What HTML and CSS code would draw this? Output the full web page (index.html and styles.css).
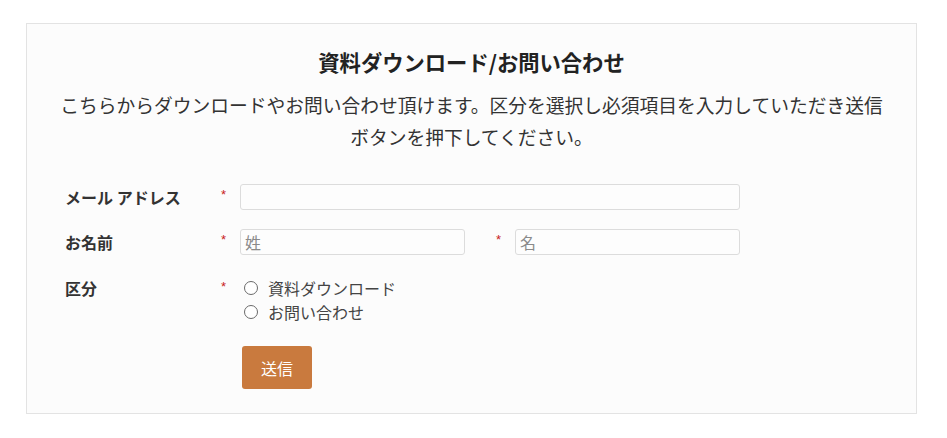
FILE: index.html
```
<!DOCTYPE html>
<html lang="ja">
  <head>
    <meta charset="UTF-8" />
    <meta name="viewport" content="width=device-width, initial-scale=1.0"/>
    <title>資料ダウンロード/お問い合わせ</title>
    <link rel="stylesheet" href="styles.css">
  </head>
  <body>
    <div class="card">
      <h2 class="title">資料ダウンロード/お問い合わせ</h2>
      <p class="lead">こちらからダウンロードやお問い合わせ頂けます。区分を選択し必須項目を入力していただき送信ボタンを押下してください。</p>

      <form class="form" onsubmit="return false">
        <div class="row">
          <label class="label" for="email">メール アドレス</label>
          <span class="req">*</span>
          <div class="field">
            <input class="input input-wide" type="email" id="email">
          </div>
        </div>

        <div class="row row-name">
          <label class="label" for="lastname">お名前</label>
          <span class="req">*</span>
          <div class="field">
            <input class="input input-half" type="text" id="lastname" placeholder="姓">
            <span class="req req-inner">*</span>
            <input class="input input-half" type="text" id="firstname" placeholder="名">
          </div>
        </div>

        <div class="row row-choice">
          <span class="label">区分</span>
          <span class="req">*</span>
          <div class="field choices">
            <label class="choice"><input type="radio" name="kind" value="download"> 資料ダウンロード</label>
            <label class="choice"><input type="radio" name="kind" value="contact"> お問い合わせ</label>
          </div>
        </div>

        <div class="actions">
          <button type="submit" class="submit">送信</button>
        </div>
      </form>
    </div>
  </body>
</html>
```

FILE: styles.css
```
body {
  font-family: "Noto Sans CJK JP", "Noto Sans", sans-serif;
  background: #fff;
  color: #333;
  margin: 0;
  padding: 23px 30px 0 26px;
}

.card {
  box-sizing: border-box;
  height: 391px;
  background: #fcfcfc;
  border: 1px solid #e3e3e3;
  padding: 23px 30px 0;
}

.title {
  text-align: center;
  font-size: 21.3px;
  font-weight: bold;
  line-height: 30px;
  color: #222;
  margin: 0 0 12px;
}

.lead {
  text-align: center;
  font-size: 18.75px;
  line-height: 32px;
  color: #333;
  margin: 0 0 31px;
}

.form {
  padding-left: 8px;
}

.row {
  display: flex;
  align-items: flex-start;
  margin-bottom: 19px;
}

.row-name {
  margin-bottom: 21px;
}

.row-choice {
  margin-bottom: 22px;
}

.label {
  width: 153px;
  font-size: 16px;
  font-weight: bold;
  line-height: 26px;
  color: #333;
}

.row-choice .label {
  line-height: 24px;
}

.req {
  width: 22px;
  font-family: "Liberation Sans", sans-serif;
  font-size: 13px;
  line-height: 22px;
  color: #c8211b;
  padding-left: 3px;
  box-sizing: border-box;
}

.field {
  display: flex;
  align-items: center;
}

.req-inner {
  width: 19px;
  margin-left: 31px;
  padding-left: 0;
  line-height: 22px;
  align-self: flex-start;
}

.input {
  height: 26px;
  box-sizing: border-box;
  border: 1px solid #dcdcdc;
  border-radius: 3px;
  background: #fdfdfd;
  padding: 0 4px;
  font-family: inherit;
  font-size: 16px;
  color: #333;
  outline: none;
}

.input::placeholder {
  color: #8a8a8a;
}

.input-wide {
  width: 500px;
}

.input-half {
  width: 225px;
}

.choices {
  flex-direction: column;
  align-items: flex-start;
}

.choice {
  display: flex;
  align-items: center;
  font-size: 16px;
  line-height: 24px;
  color: #444;
}

.choice input {
  appearance: none;
  width: 14px;
  height: 14px;
  margin: 0 10px 0 4px;
  border: 1px solid #6a6a6a;
  border-radius: 50%;
  background: #fff;
}

.actions {
  padding-left: 177px;
}

.submit {
  width: 70px;
  height: 43px;
  background: #c97a3e;
  color: #fff;
  border: none;
  border-radius: 3px;
  font-family: inherit;
  font-size: 16px;
  cursor: pointer;
}
```
